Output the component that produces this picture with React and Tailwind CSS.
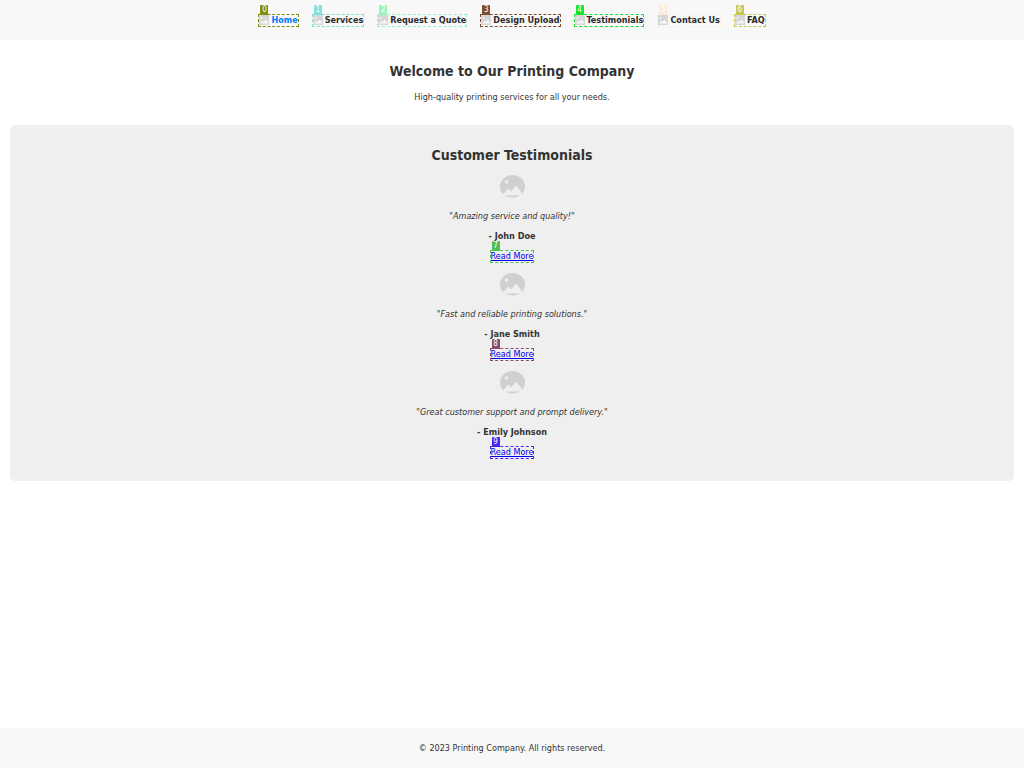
const navItems = [
  { label: 'Home', tag: 'bg-[#7f8f0f]', line: 'border-[#7f8f0f]', text: 'text-[#007bff]' },
  { label: 'Services', tag: 'bg-[#7fe3dc]', line: 'border-[#7fe3dc]', text: 'text-[#2b2b2b]' },
  { label: 'Request a Quote', tag: 'bg-[#98f5bd]', line: 'border-[#98f5bd]', text: 'text-[#2b2b2b]' },
  { label: 'Design Upload', tag: 'bg-[#824e30]', line: 'border-[#824e30]', text: 'text-[#2b2b2b]' },
  { label: 'Testimonials', tag: 'bg-[#1be32b]', line: 'border-[#1be32b]', text: 'text-[#2b2b2b]' },
  { label: 'Contact Us', tag: 'bg-[#ffe9d9]', line: 'border-[#ffe9d9]', text: 'text-[#2b2b2b]' },
  { label: 'FAQ', tag: 'bg-[#c8c850]', line: 'border-[#c8c850]', text: 'text-[#2b2b2b]' },
];

const testimonials = [
  { quote: 'Amazing service and quality!', name: 'John Doe', tag: 'bg-[#4fbe57]', line: 'border-[#4fbe57]' },
  { quote: 'Fast and reliable printing solutions.', name: 'Jane Smith', tag: 'bg-[#8b4a6b]', line: 'border-[#8b4a6b]' },
  { quote: 'Great customer support and prompt delivery.', name: 'Emily Johnson', tag: 'bg-[#4a24ee]', line: 'border-[#4a24ee]' },
];

function Marker({ index, tag, line }) {
  return (
    <span className={`pointer-events-none absolute -inset-px border border-dashed ${line}`}>
      <span className={`absolute bottom-full left-px flex h-[10px] w-2 items-center justify-center rounded-t-[1px] text-[8px] leading-none font-normal text-white ${tag}`}>
        {index}
      </span>
    </span>
  );
}

function Thumbnail() {
  return (
    <svg viewBox="0 0 20 20" className="size-[10px] shrink-0" aria-hidden="true">
      <rect width="20" height="20" fill="#d6d6d6" />
      <circle cx="5" cy="6" r="1.8" fill="#f8f8f8" />
      <path d="M2 17 L6 12 L9 14 L13 9 L18 15 V17 Z" fill="#f8f8f8" />
    </svg>
  );
}

function Avatar() {
  return (
    <svg viewBox="0 0 50 50" className="size-[25px]" aria-hidden="true">
      <path d="M25 0 C39 0 50 10 50 23 C50 30 47 36 42 40 H8 C3 36 0 30 0 23 C0 10 11 0 25 0 Z" fill="#d0d0d0" />
      <circle cx="13" cy="14" r="3.5" fill="#efefef" />
      <path d="M6 39 L17 27 L22 33 L32 21 L44 36 L42 41 H8 Z" fill="#efefef" />
      <path d="M10 41 H40 C31 46 19 46 10 41 Z" fill="#d0d0d0" />
    </svg>
  );
}

export default function App() {
  return (
    <div className="flex min-h-screen flex-col bg-white font-['DejaVu_Sans_Condensed','DejaVu_Sans',sans-serif] text-[9px] leading-4 text-[#333333]">
      <nav className="bg-[#f8f8f8] py-3">
        <ul className="flex h-4 items-center justify-center gap-[15px]">
          {navItems.map((item, i) => (
            <li key={item.label}>
              <a href="#" className={`relative flex h-[11px] items-center gap-[2px] font-bold ${item.text}`}>
                <Thumbnail />
                {item.label}
                <Marker index={i} tag={item.tag} line={item.line} />
              </a>
            </li>
          ))}
        </ul>
      </nav>
      <main className="grow">
        <header className="px-5 pt-[21px] pb-5 text-center">
          <h1 className="text-[14px] leading-5 font-bold">Welcome to Our Printing Company</h1>
          <p className="mt-2">High-quality printing services for all your needs.</p>
        </header>
        <section className="mx-[10px] rounded-[5px] bg-[#efefef] px-5 pt-5 pb-[22px] text-center">
          <h2 className="text-[14px] leading-5 font-bold">Customer Testimonials</h2>
          {testimonials.map((t, i) => (
            <article key={t.name} className="flex h-[98px] flex-col items-center pt-[10px]">
              <Avatar />
              <p className="mt-2 italic">"{t.quote}"</p>
              <p className="mt-1 font-bold">- {t.name}</p>
              <a href="#" className="relative mt-[7px] h-[11px] leading-[11px] text-[#0000ee] underline">
                Read More
                <Marker index={i + 7} tag={t.tag} line={t.line} />
              </a>
            </article>
          ))}
        </section>
      </main>
      <footer className="bg-[#f8f8f8] py-3 text-center">© 2023 Printing Company. All rights reserved.</footer>
    </div>
  );
}
